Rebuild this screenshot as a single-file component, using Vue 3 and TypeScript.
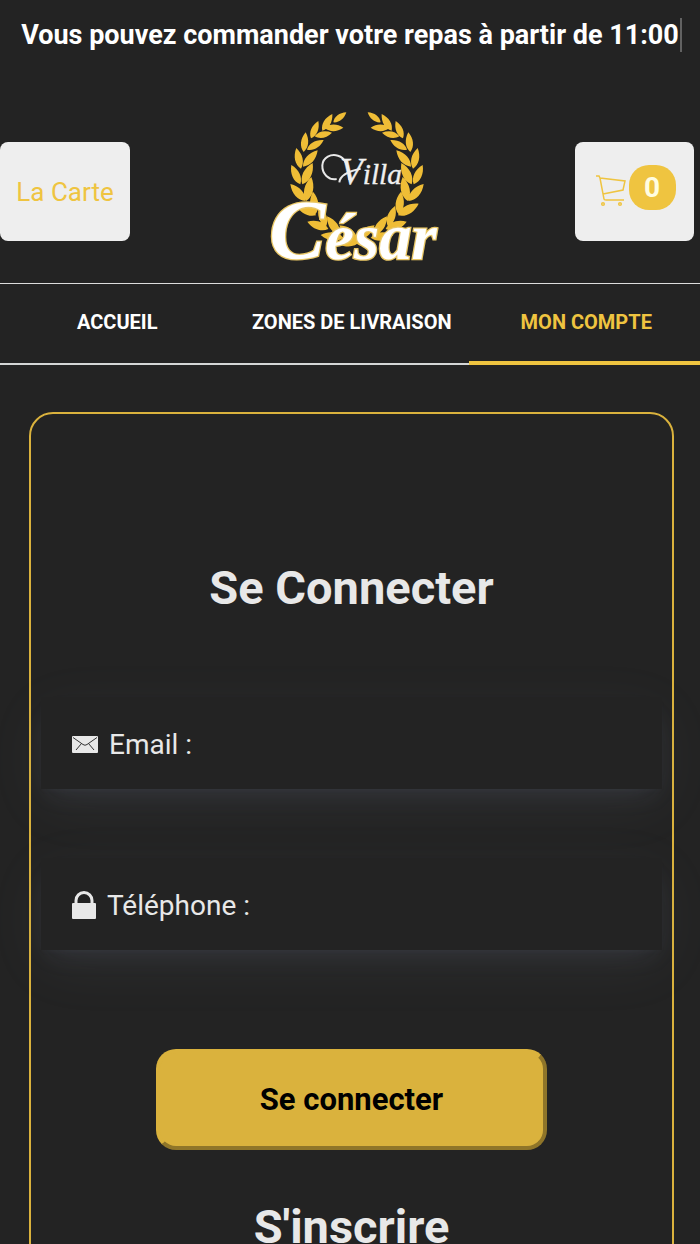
<script setup lang="ts">
import { ref } from 'vue'

interface Tab {
  label: string
  active: boolean
}

const tabs: Tab[] = [
  { label: 'ACCUEIL', active: false },
  { label: 'ZONES DE LIVRAISON', active: false },
  { label: 'MON COMPTE', active: true },
]

const email = ref('')
const phone = ref('')
const cartCount = ref(0)

// Laurel leaves of the left branch: [base x, base y, tip x, tip y]
const leaves: number[][] = [
  [220, 67, 259, 37],
  [187, 92, 217, 42],
  [153, 115, 175, 63],
  [131, 156, 137, 97],
  [123, 206, 109, 144],
  [121, 253, 94, 195],
  [137, 303, 91, 252],
  [168, 346, 106, 311],
  [205, 387, 142, 365],
  [195, 84, 250, 83],
  [164, 109, 216, 98],
  [141, 149, 191, 120],
  [129, 200, 173, 151],
  [127, 253, 158, 189],
  [139, 303, 154, 231],
  [166, 343, 159, 275],
  [198, 380, 177, 318],
  [240, 406, 201, 349],
  [250, 413, 182, 405],
  [292, 418, 238, 376],
  [300, 424, 236, 432],
]

function leafPath([bx, by, tx, ty]: number[]): string {
  const dx = tx - bx
  const dy = ty - by
  const w = 0.24
  const p = (t: number, s: number) => `${bx + dx * t - dy * s} ${by + dy * t + dx * s}`
  return `M${bx} ${by}C${p(0.25, w)} ${p(0.65, w)} ${tx} ${ty}C${p(0.65, -w)} ${p(0.25, -w)} ${bx} ${by}Z`
}

const branch = leaves.map(leafPath).join('')
</script>

<template>
  <div class="page">
    <p class="notice"><span class="typed">Vous pouvez commander votre repas à partir de 11:00</span></p>

    <header class="header">
      <button type="button" class="tile menu">La Carte</button>
      <a href="#" class="logo" aria-label="Villa César">
        <svg viewBox="-6 0 570 510" width="190" height="170">
          <g class="laurel">
            <path :d="branch" />
            <path :d="branch" transform="translate(582 0) scale(-1 1)" />
          </g>
          <path
            class="flourish"
            d="M230 237C206 241 186 222 187 196C189 171 213 161 234 167C256 173 267 196 268 240M238 247C240 222 272 212 302 206"
          />
          <text class="villa" x="240" y="252"><tspan class="villa-initial">V</tspan>illa</text>
          <text class="cesar" x="28" y="476"><tspan class="cesar-initial">C</tspan>ésar</text>
        </svg>
      </a>
      <button type="button" class="tile cart" aria-label="Panier">
        <svg viewBox="0 0 30 32" width="30" height="32">
          <path d="M0 1h3l1 2 4 21q0 1 2 1h18M4 3l25 3-2 9-20 4" />
          <circle cx="7" cy="29" r="1.3" />
          <circle cx="24" cy="29" r="1.3" />
        </svg>
        <span class="badge">{{ cartCount }}</span>
      </button>
    </header>

    <nav class="tabs">
      <a v-for="tab in tabs" :key="tab.label" href="#" class="tab" :class="{ active: tab.active }">{{ tab.label }}</a>
    </nav>

    <main class="card">
      <h1>Se Connecter</h1>
      <form @submit.prevent>
        <div class="field">
          <svg viewBox="0 0 26 18" width="26" height="18">
            <rect width="26" height="17" rx="1" />
            <path d="M1 1.5L11 8.500Q13 10 15 8.500L25 1.500M4 14L9.500 7.500M22 14L16.500 7.500" />
          </svg>
          <label for="email">Email :</label>
          <input id="email" v-model="email" type="email" />
        </div>
        <div class="field">
          <svg viewBox="0 0 24 30" width="24" height="30">
            <rect y="12" width="24" height="16" rx="1" />
            <path class="shackle" d="M4 13V9.500a8 8 0 0 1 16 0V13" />
          </svg>
          <label for="phone">Téléphone :</label>
          <input id="phone" v-model="phone" type="tel" />
        </div>
        <button type="submit" class="submit">Se connecter</button>
      </form>
      <h2>S'inscrire</h2>
    </main>
  </div>
</template>

<style>
body {
  margin: 0;
  background: #232323;
}
</style>

<style scoped>
.page {
  height: 100vh;
  overflow: hidden;
  background: #232323;
  color: #fff;
  font-family: Roboto, "Liberation Sans", sans-serif;
}

.page * {
  box-sizing: border-box;
}

.notice {
  margin: 0;
  padding: 18px 0 0 3px;
  text-align: center;
  white-space: nowrap;
  font-size: 27px;
  font-weight: 700;
  line-height: 34px;
}

.typed {
  display: inline-block;
  padding-right: 1px;
  border-right: 2px solid #626262;
}

.header {
  display: flex;
  align-items: center;
  justify-content: space-between;
  margin-top: 48px;
  padding-right: 6px;
  height: 184px;
  border-bottom: 1px solid #dcdcdc;
}

.tile {
  display: flex;
  align-items: center;
  justify-content: center;
  height: 99px;
  margin: 0;
  padding: 0;
  border: 0;
  border-radius: 8px;
  background: #eee;
  color: #efc440;
  font-family: inherit;
  font-size: 26px;
}

.menu {
  width: 130px;
}

.cart {
  width: 119px;
  gap: 3px;
  padding: 0 0 8px 2px;
}

.cart svg {
  margin-top: 6px;
  fill: none;
  stroke: #efc440;
  stroke-width: 1.5;
}

.badge {
  width: 47px;
  border-radius: 20px;
  background: #efc440;
  color: #fffde0;
  font-size: 28px;
  font-weight: 700;
  line-height: 45px;
}

.logo {
  display: block;
  height: 170px;
  margin-bottom: 14px;
}

.logo svg {
  overflow: visible;
}

.laurel {
  fill: #efbd36;
}

.flourish {
  fill: none;
  stroke: #e8e8e8;
  stroke-width: 6;
}

.villa {
  fill: #f0f0f0;
  stroke: #f0f0f0;
  stroke-width: 1;
  font: italic 88px "Liberation Serif", serif;
}

.villa-initial {
  font-size: 112px;
}

.cesar {
  fill: #fff;
  stroke: #e9c766;
  stroke-width: 8;
  paint-order: stroke;
  font: italic 700 194px "Liberation Serif", serif;
}

.cesar-initial {
  font-size: 252px;
}

.tabs {
  display: flex;
  height: 81px;
  border-bottom: 2px solid #d4d6d6;
}

.tab {
  flex: 0 0 33.5%;
  height: 81px;
  border-bottom: 4px solid transparent;
  color: #fff;
  font-size: 20px;
  font-weight: 700;
  line-height: 77px;
  text-align: center;
  text-decoration: none;
}

.tab.active {
  border-bottom-color: #efc440;
  color: #efc440;
}

.card {
  margin: 47px 26px 0 29px;
  padding: 146px 10px 60px;
  border: 2px solid #dab23d;
  border-radius: 24px;
  color: #e8e8e8;
  text-align: center;
}

h1,
h2 {
  margin: 0;
  font-size: 47px;
  font-weight: 700;
  line-height: 56px;
}

form {
  display: flex;
  flex-direction: column;
  align-items: center;
  gap: 69px;
  margin-top: 81px;
}

.field {
  display: flex;
  align-items: center;
  gap: 11px;
  align-self: stretch;
  height: 92px;
  padding: 3px 31px 0;
  background: #232323;
  box-shadow:
    0 15px 60px rgba(170, 190, 195, 0.07),
    0 12px 24px -8px rgba(140, 150, 190, 0.12),
    0 3px 6px -2px rgba(140, 150, 190, 0.05);
}

.field svg {
  flex: none;
  fill: #e8e8e8;
}

.field path {
  fill: none;
  stroke: #333;
  stroke-width: 1;
}

.field .shackle {
  stroke: #e8e8e8;
  stroke-width: 3;
}

.field label {
  font-size: 28px;
}

.field input {
  flex: 1;
  min-width: 0;
  padding: 0;
  border: 0;
  outline: 0;
  background: transparent;
  color: inherit;
  font: inherit;
  font-size: 28px;
}

.submit {
  width: 63%;
  height: 101px;
  margin: 30px 0 0;
  padding: 0;
  border: 4px solid;
  border-color: #dab23d #8f7529 #8f7529 #dab23d;
  border-radius: 20px;
  background: #dab23d;
  color: #000;
  font-family: inherit;
  font-size: 31px;
  font-weight: 700;
}

h2 {
  margin-top: 49px;
}
</style>
